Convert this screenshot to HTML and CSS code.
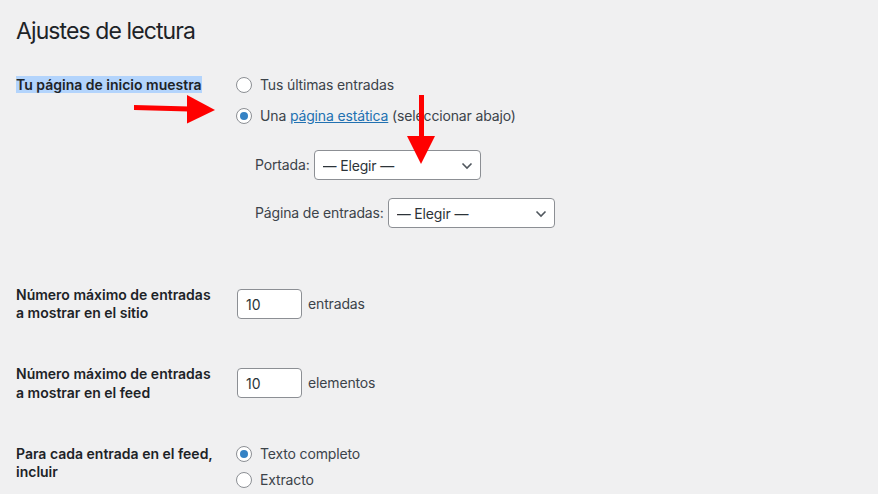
FILE: index.html
```html
<!DOCTYPE html>
<html lang="es">
<head>
  <meta charset="UTF-8">
  <title>Ajustes de lectura</title>
  <link rel="stylesheet" href="styles.css">
</head>
<body>
  <div class="wrap">
    <h1>Ajustes de lectura</h1>

    <div class="form-table">
      <div class="row row-front">
        <div class="th"><span class="selected">Tu página de inicio muestra</span></div>
        <div class="td">
          <div class="choices">
            <label class="choice"><span class="radio"></span>Tus últimas entradas</label>
            <label class="choice"><span class="radio checked"></span>Una&nbsp;<a href="#">página estática</a>&nbsp;(seleccionar abajo)</label>
          </div>
          <ul class="pages">
            <li>
              <label>Portada:</label>
              <span class="select-wrap">
                <select><option>— Elegir —</option></select>
                <svg class="chev" width="12" height="8" viewBox="0 0 12 8"><path d="M1.5 1.5 L6 6 L10.5 1.5" fill="none" stroke="#50575e" stroke-width="1.6"/></svg>
              </span>
            </li>
            <li>
              <label>Página de entradas:</label>
              <span class="select-wrap">
                <select><option>— Elegir —</option></select>
                <svg class="chev" width="12" height="8" viewBox="0 0 12 8"><path d="M1.5 1.5 L6 6 L10.5 1.5" fill="none" stroke="#50575e" stroke-width="1.6"/></svg>
              </span>
            </li>
          </ul>
        </div>
      </div>

      <div class="row">
        <div class="th">Número máximo de entradas<br>a mostrar en el sitio</div>
        <div class="td inline">
          <input class="small-text" type="text" value="10"> entradas
        </div>
      </div>

      <div class="row">
        <div class="th">Número máximo de entradas<br>a mostrar en el feed</div>
        <div class="td inline">
          <input class="small-text" type="text" value="10"> elementos
        </div>
      </div>

      <div class="row">
        <div class="th">Para cada entrada en el feed,<br>incluir</div>
        <div class="td">
          <div class="choices tight">
            <label class="choice"><span class="radio checked"></span>Texto completo</label>
            <label class="choice"><span class="radio"></span>Extracto</label>
          </div>
        </div>
      </div>
    </div>
  </div>

  <svg class="arrows" width="878" height="494" viewBox="0 0 878 494">
    <polygon points="134,105 189,106.5 189,111.5 134,110" fill="#ff0000"/>
    <polygon points="187,95 215,110 187,123.5" fill="#ff0000"/>
    <polygon points="419,95 424,95 424,137 419,137" fill="#ff0000"/>
    <polygon points="407,136 435,136 421,164" fill="#ff0000"/>
  </svg>
</body>
</html>
```

FILE: styles.css
```css
html, body {
  margin: 0;
  padding: 0;
  background: #f0f0f1;
  color: #3c434a;
  font-family: Inter, "Liberation Sans", sans-serif;
  font-size: 14px;
  line-height: 1.3;
  overflow: hidden;
}

.wrap {
  padding: 0 16px;
}

h1 {
  margin: 0;
  padding: 15px 0 0;
  font-size: 23px;
  font-weight: 400;
  line-height: 32px;
  letter-spacing: -0.9px;
  color: #1d2327;
}

.form-table {
  margin-top: 9px;
}

.row {
  display: flex;
}

.th {
  width: 220px;
  flex: none;
  padding: 20px 0 23px;
  font-weight: 600;
  color: #1d2327;
}

.selected {
  background: #b3d4fc;
}

.td {
  padding: 20px 0 15px;
  letter-spacing: -0.15px;
}

.row-front .td {
  padding-bottom: 38px;
}

.choices {
  display: flex;
  flex-direction: column;
  gap: 13px;
}

.choices.tight {
  gap: 8px;
}

.choice {
  display: flex;
  align-items: center;
  color: #3c434a;
  height: 18px;
}

.choice a {
  color: #2271b1;
  text-decoration: underline;
}

.radio {
  width: 14px;
  height: 14px;
  border: 1px solid #8c8f94;
  border-radius: 50%;
  background: #fff;
  margin-right: 8px;
  display: flex;
  align-items: center;
  justify-content: center;
  flex: none;
}

.radio.checked::before {
  content: "";
  width: 8px;
  height: 8px;
  border-radius: 50%;
  background: #3582c4;
}

.pages {
  list-style: none;
  margin: 25px 0 0 19px;
  padding: 0;
  display: flex;
  flex-direction: column;
  gap: 18px;
}

.pages li {
  display: flex;
  align-items: center;
  gap: 4px;
}

.select-wrap {
  position: relative;
  display: inline-block;
}

select {
  appearance: none;
  -webkit-appearance: none;
  width: 167px;
  height: 30px;
  border: 1px solid #8c8f94;
  border-radius: 4px;
  background: #fff;
  color: #2c3338;
  font-family: inherit;
  font-size: 14px;
  letter-spacing: -0.15px;
  padding: 0 24px 0 8px;
  display: block;
}

.chev {
  position: absolute;
  right: 8px;
  top: 12px;
}

.td.inline {
  display: flex;
  align-items: center;
  align-self: flex-start;
  gap: 6px;
  padding-top: 23px;
}

.small-text {
  width: 65px;
  height: 30px;
  box-sizing: border-box;
  border: 1px solid #8c8f94;
  border-radius: 4px;
  background: #fff;
  color: #2c3338;
  font-family: inherit;
  font-size: 14px;
  padding: 0 8px;
  margin-left: 1px;
}

.arrows {
  position: absolute;
  top: 0;
  left: 0;
  pointer-events: none;
}
```
